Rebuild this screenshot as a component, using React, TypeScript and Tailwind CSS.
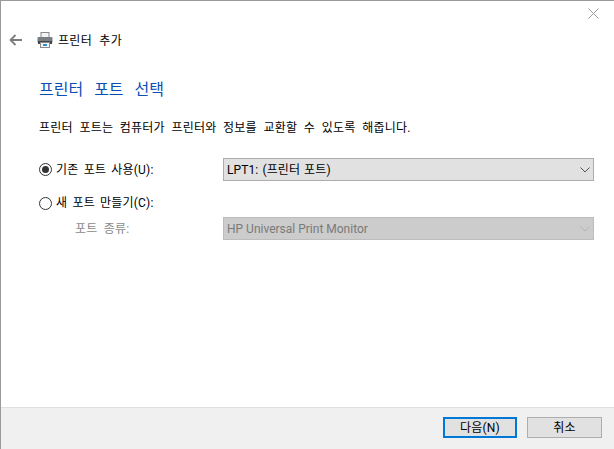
const font = { fontFamily: 'Roboto, "Noto Sans CJK KR", "Liberation Sans", sans-serif' };

function Radio({ checked }: { checked?: boolean }) {
  return (
    <span className="flex h-[13px] w-[13px] shrink-0 items-center justify-center rounded-full border border-[#333333] bg-white">
      {checked && <span className="h-[7px] w-[7px] rounded-full bg-[#333333]" />}
    </span>
  );
}

function Chevron({ color }: { color: string }) {
  return (
    <svg width="10" height="6" viewBox="0 0 10 6" fill="none" stroke={color} strokeWidth="1">
      <path d="M0.5 0.5 L5 5 L9.5 0.5" />
    </svg>
  );
}

function PrinterIcon() {
  return (
    <svg width="16" height="16" viewBox="0 0 16 16" className="block">
      <rect x="4" y="0.5" width="8" height="5" fill="#f4f4f4" stroke="#8a8a8a" />
      <rect x="0.5" y="5" width="15" height="6" rx="1" fill="#7b7e81" />
      <rect x="1" y="9" width="14" height="3" fill="#44484c" />
      <rect x="3.5" y="10.5" width="9" height="5" fill="#f4f4f4" stroke="#8a8a8a" />
      <rect x="6" y="12" width="4" height="2" fill="#2b8fd0" />
    </svg>
  );
}

export default function App() {
  return (
    <div className="flex h-[449px] w-[614px] flex-col overflow-hidden border-l border-t border-[#9a9a9a] bg-white text-black" style={font}>
      <div className="flex h-[25px] justify-end">
        <svg className="mr-[15px] mt-[7px]" width="11" height="11" viewBox="0 0 11 11" stroke="#9c9c9c" strokeWidth="1">
          <path d="M0.5 0.5 L10.5 10.5 M10.5 0.5 L0.5 10.5" />
        </svg>
      </div>

      <div className="flex h-[28px] items-center">
        <svg className="ml-[8px]" width="13" height="12" viewBox="0 0 13 12" fill="none" stroke="#7d7d7d" strokeWidth="1.8">
          <path d="M13 6 H1.5 M6.5 1 L1.5 6 L6.5 11" />
        </svg>
        <span className="ml-[15px]"><PrinterIcon /></span>
        <span className="ml-[5px] pt-[1px] text-[12px] leading-[16px] tracking-[0.3px] [word-spacing:4px]">프린터 추가</span>
      </div>

      <div className="flex flex-1 flex-col pl-[38px] pr-[20px]">
        <h1 className="mt-[25px] text-[16px] font-normal leading-[22px] text-[#0a50b4] [word-spacing:7px]">프린터 포트 선택</h1>
        <p className="mt-[19px] text-[12px] leading-[16px] tracking-[0.2px] [word-spacing:3.5px]">프린터 포트는 컴퓨터가 프린터와 정보를 교환할 수 있도록 해줍니다.</p>

        <div className="mt-[22px] flex h-[23px] items-center">
          <div className="flex w-[184px] items-center gap-[4px]">
            <Radio checked />
            <span className="text-[12px] leading-[16px] tracking-[0.2px] [word-spacing:2px]">기존 포트 사용(U):</span>
          </div>
          <div className="flex h-[23px] w-[371px] items-center justify-between border border-[#adadad] bg-[#e1e1e1] pl-[3px] pr-[3px]">
            <span className="text-[12px] leading-[16px] tracking-[0.1px] [word-spacing:1px]">LPT1: (프린터 포트)</span>
            <Chevron color="#555555" />
          </div>
        </div>

        <div className="mt-[14px] flex h-[16px] items-center gap-[4px]">
          <Radio />
          <span className="text-[12px] leading-[16px] tracking-[0.2px] [word-spacing:2px]">새 포트 만들기(C):</span>
        </div>

        <div className="mt-[6px] flex h-[23px] items-center">
          <span className="ml-[36px] w-[148px] text-[12px] leading-[16px] tracking-[0.2px] text-[#8a8a8a] [word-spacing:3px]">포트 종류:</span>
          <div className="flex h-[23px] w-[371px] items-center justify-between border border-[#bcbcbc] bg-[#cccccc] pl-[3px] pr-[3px]">
            <span className="text-[12px] leading-[16px] text-[#7a7a7a]">HP Universal Print Monitor</span>
            <Chevron color="#b4b4b4" />
          </div>
        </div>
      </div>

      <div className="flex h-[42px] items-start justify-end gap-[10px] border-t border-[#dfdfdf] bg-[#f0f0f0] pr-[12px] pt-[9px]">
        <button className="flex h-[21px] w-[74px] items-center justify-center border-2 border-[#0078d7] bg-[#e1e1e1] text-[12px] leading-[16px] tracking-[0.2px]">다음(N)</button>
        <button className="flex h-[21px] w-[75px] items-center justify-center border border-[#adadad] bg-[#e1e1e1] text-[12px] leading-[16px] tracking-[0.2px]">취소</button>
      </div>
    </div>
  );
}
